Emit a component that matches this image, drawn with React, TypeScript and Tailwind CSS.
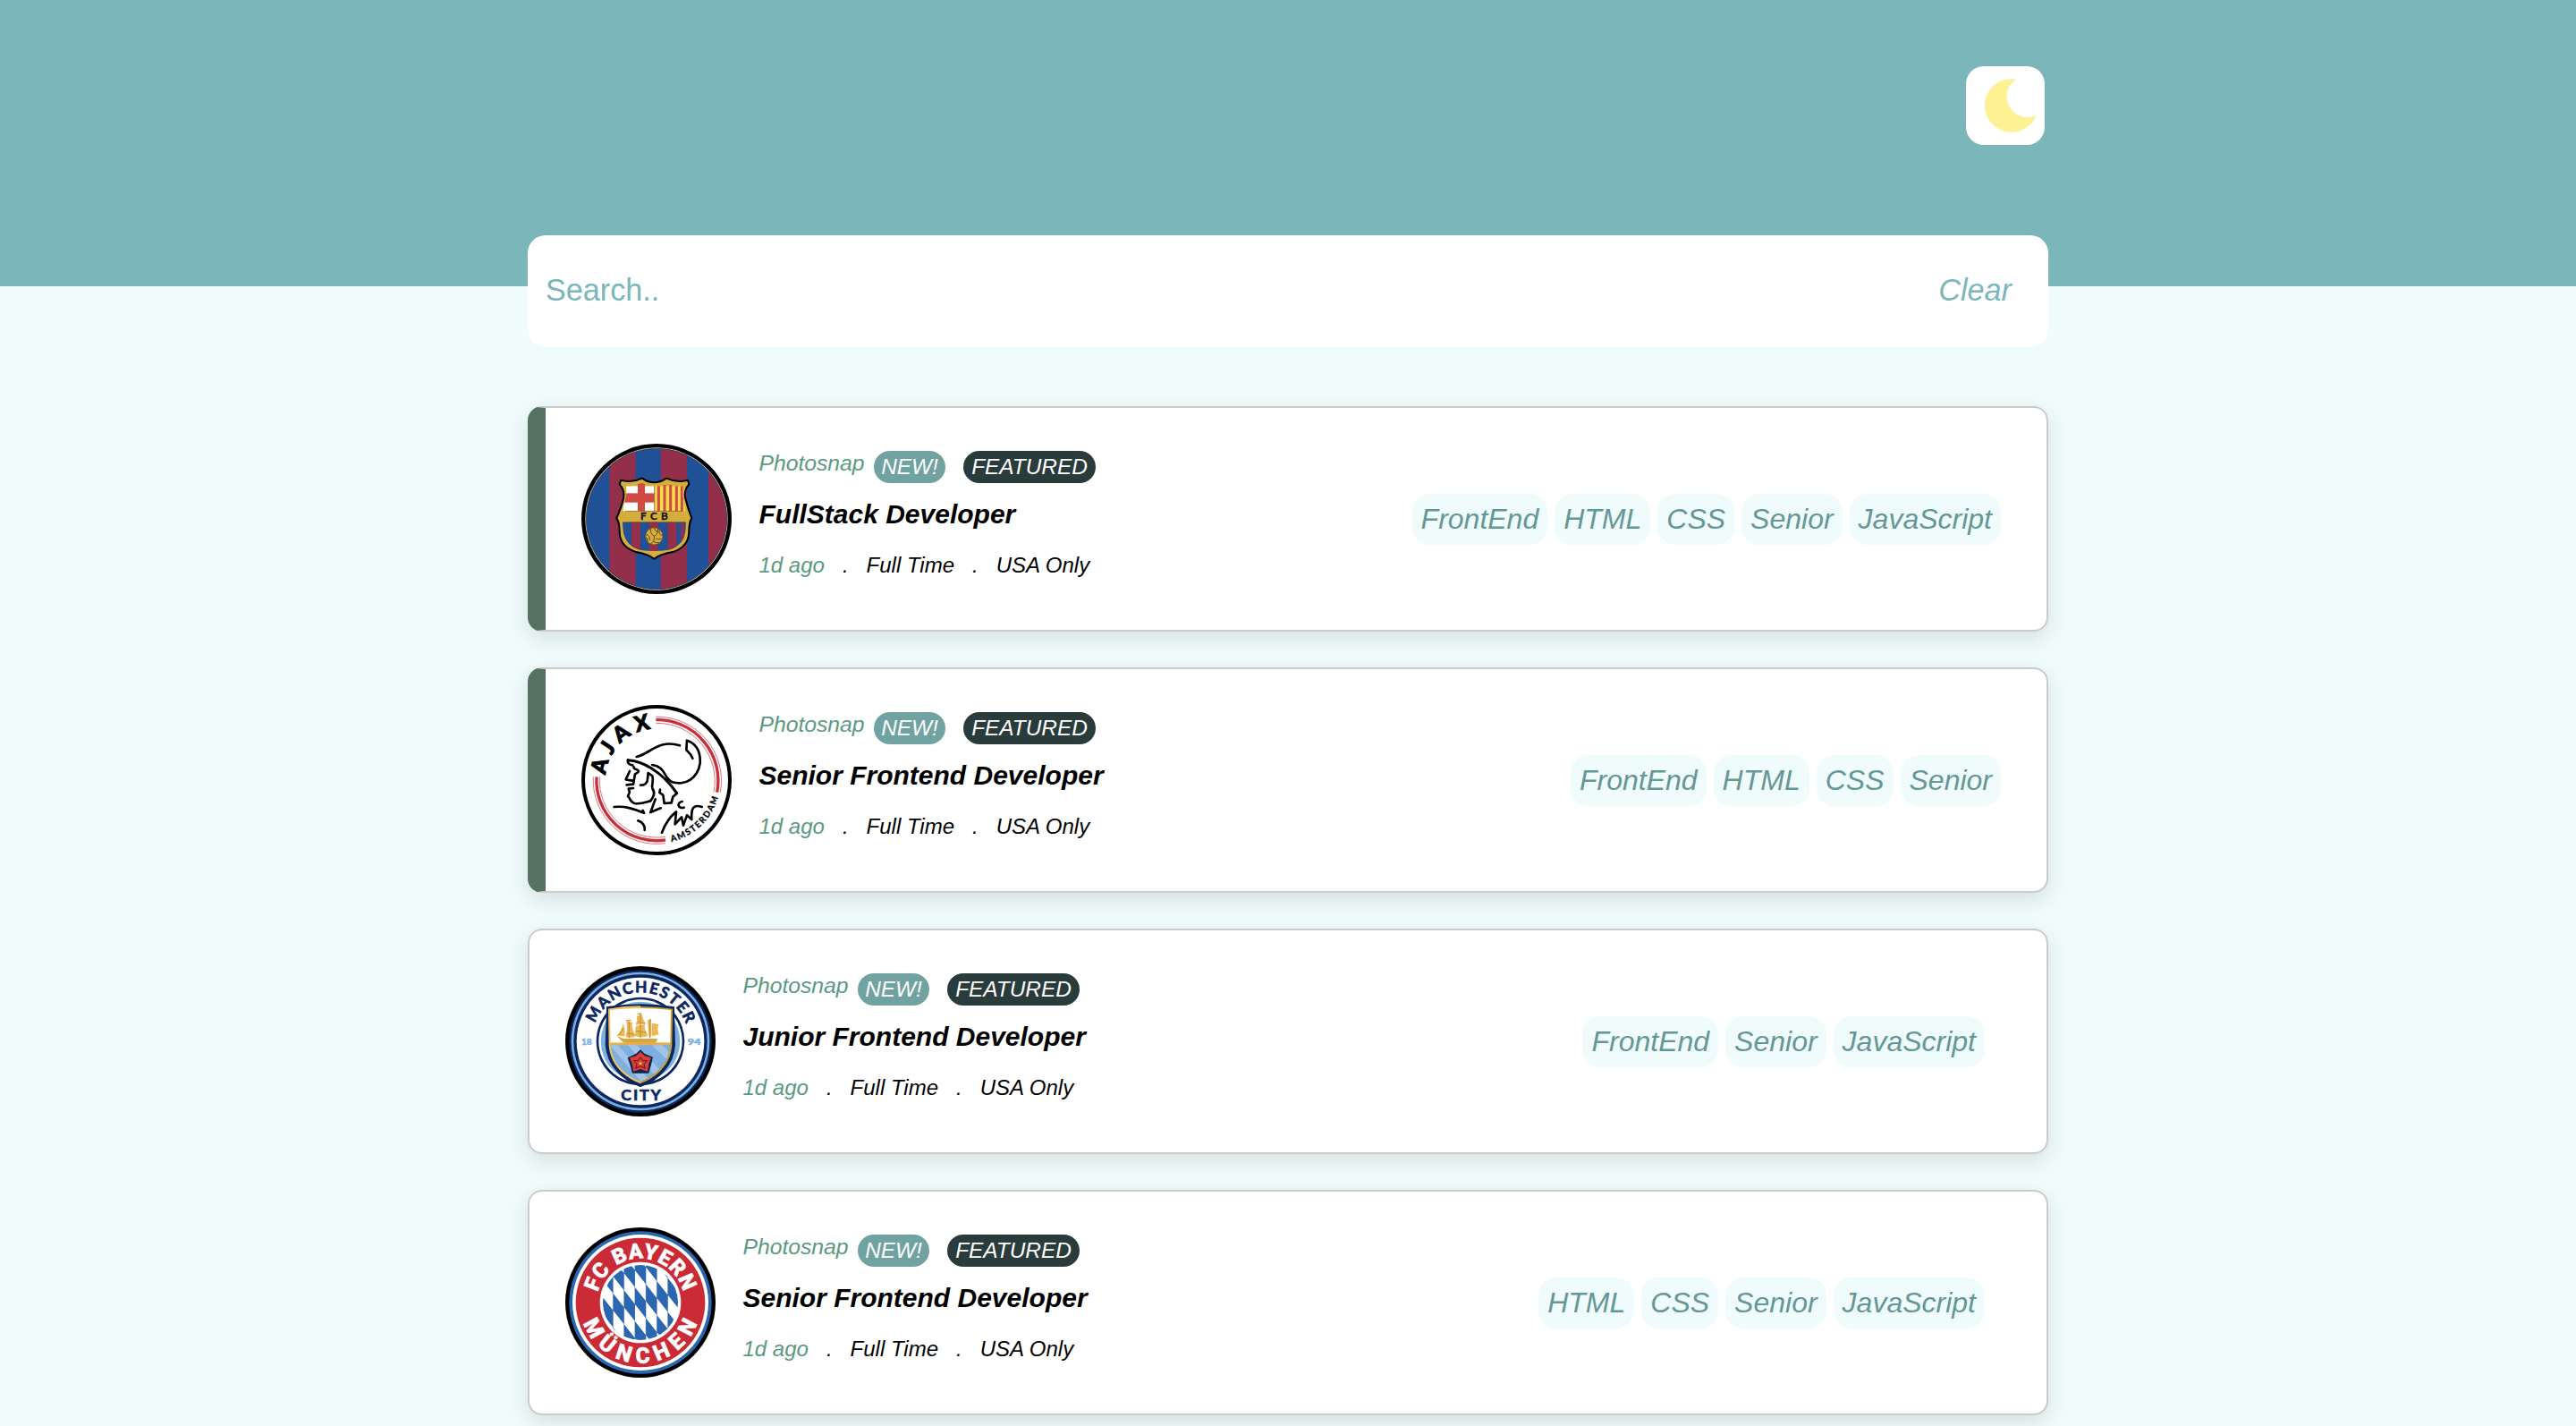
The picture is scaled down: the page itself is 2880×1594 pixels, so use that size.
import React from "react";

function BarcelonaCrest() {
  return (
    <svg viewBox="60 48 504 504" className="block size-[168px] not-italic">
      <defs>
        <clipPath id="fcb-disc"><circle cx="312" cy="300" r="236" /></clipPath>
        <clipPath id="fcb-shield">
          <path d="M210 190 Q236 190 263 179 Q283 190 304 190 Q325 190 345 179 Q370 190 402 190 Q396 215 404 240 Q412 275 410 330 Q408 385 360 402 Q325 410 304 410 Q283 410 250 402 Q202 385 199 330 Q196 275 205 240 Q214 215 210 190 Z" />
        </clipPath>
      </defs>
      <circle cx="312" cy="300" r="252" fill="#000" />
      <circle cx="312" cy="300" r="239" fill="#d9d9d9" />
      <g clipPath="url(#fcb-disc)">
        <rect x="60" y="48" width="504" height="504" fill="#205096" />
        <rect x="154" y="48" width="88" height="504" fill="#932f4b" />
        <rect x="326" y="48" width="88" height="504" fill="#932f4b" />
        <rect x="486" y="48" width="80" height="504" fill="#932f4b" />
      </g>
      <circle cx="312" cy="300" r="236" fill="none" stroke="#333" strokeWidth="2" />
      <path
        d="M193 170 Q230 180 264 164 Q283 178 304 178 Q325 178 345 164 Q380 180 417 170 L421 184 Q402 205 409 232 Q416 262 430 298 Q421 312 421 342 Q421 392 370 410 Q322 418 304 434 Q286 418 240 410 Q188 392 188 342 Q188 312 178 298 Q194 262 201 232 Q207 205 188 184 Z"
        fill="#d5ad3c" stroke="#000" strokeWidth="6" strokeLinejoin="round"
      />
      <g clipPath="url(#fcb-shield)">
        <rect x="196" y="190" width="109" height="84" fill="#fff" />
        <rect x="249" y="178" width="24" height="96" fill="#d24b42" />
        <rect x="196" y="214" width="109" height="31" fill="#d24b42" />
        <rect x="305" y="190" width="110" height="84" fill="#f8dc4a" />
        <path d="M319 190V274M339 186V274M359 186V274M379 190V274M397 190V274" stroke="#d24b42" strokeWidth="9" />
        <rect x="190" y="311" width="230" height="96" fill="#205096" />
        <path d="M243 311V407M302 311V407M364 311V407" stroke="#932f4b" strokeWidth="30" />
        <path d="M400 311V407" stroke="#932f4b" strokeWidth="12" />
      </g>
      <path d="M207 274H401M200 311H409M305 190V274" stroke="#6b5a22" strokeWidth="2" />
      <circle cx="304" cy="358" r="29" fill="#d5ad3c" stroke="#5b4a1c" strokeWidth="2" />
      <path d="M304 358Q290 350 292 332M304 358Q320 350 316 333M304 358Q306 376 292 384M278 350Q290 356 290 372M278 362Q284 370 282 376M322 338Q318 352 332 356M304 330Q306 342 318 344M310 366Q322 372 328 366M302 376Q312 382 320 380" fill="none" stroke="#5b4a1c" strokeWidth="3" />
      <text x="304" y="304" textAnchor="middle" textLength="92" fontSize="35" fontWeight="700" fill="#111" stroke="#111" strokeWidth="1" fontFamily="Lato, sans-serif">FCB</text>
    </svg>
  );
}

function AjaxCrest() {
  return (
    <svg viewBox="60 54 504 504" className="block size-[168px] not-italic">
      <defs>
        <path id="ajax-name" d="M141 289 A172 172 0 0 1 312 134" />
        <path id="ajax-city" d="M362 513 A214 214 0 0 0 525 330" />
      </defs>
      <circle cx="312" cy="306" r="246" fill="#fff" stroke="#000" strokeWidth="12" />
      <g fill="none" stroke="#c9303b">
        <path d="M310 104 A204 204 0 0 1 515 347" strokeWidth="10" />
        <path d="M310 94 A214 214 0 0 1 526 347M310 115 A194 194 0 0 1 504 347" strokeWidth="2" />
        <path d="M111 295 A202 202 0 0 0 342 507" strokeWidth="10" />
        <path d="M100 295 A213 213 0 0 0 342 518M121 295 A192 192 0 0 0 342 496" strokeWidth="2" />
      </g>
      <text fontSize="72" fontWeight="900" fontFamily="Lato, sans-serif" fill="#000" stroke="#000" strokeWidth="3" textLength="234">
        <textPath href="#ajax-name">AJAX</textPath>
      </text>
      <text fontSize="29" fontWeight="700" fontFamily="Lato, sans-serif" fill="#000" stroke="#000" strokeWidth="1" textLength="226">
        <textPath href="#ajax-city">AMSTERDAM</textPath>
      </text>
      <g fill="none" stroke="#000" strokeWidth="8" strokeLinejoin="round" strokeLinecap="round">
        <path d="M245 228C290 218 320 168 390 190" />
        <path d="M433 233C428 218 420 212 412 205L414 173C450 185 460 215 458 250C450 300 410 325 365 313C335 300 345 262 298 255" />
        <path d="M216 239C260 240 330 275 380 350" strokeWidth="9" />
        <path d="M216 239C214 250 222 256 232 256M236 262C234 272 248 268 252 276C250 284 240 284 240 286L234 320L212 322M222 276L209 304L232 308" />
        <path d="M234 333L218 335L222 346L216 360C226 368 220 378 238 384C256 388 276 380 292 376C300 364 310 350 298 334C294 322 304 312 298 292L284 282L282 302C282 314 274 324 258 323" />
        <path d="M380 350L367 362L362 382L338 384L334 356L322 348L324 338" />
        <path d="M170 396C205 392 235 402 270 416L266 408M250 442C266 446 274 460 272 474M330 482C340 455 355 430 378 412L374 454L396 430L402 458L414 424L430 438C428 410 430 384 464 396" />
        <path d="M398 378C380 380 382 404 404 398M308 370L292 414L326 400" />
      </g>
    </svg>
  );
}

function CityCrest() {
  return (
    <svg viewBox="66 45 504 504" className="block size-[168px] not-italic">
      <defs>
        <path id="mcfc-name" d="M166 237 A163 163 0 0 1 472 242" />
        <clipPath id="mcfc-shield"><path d="M216 192Q318 180 420 192L418 310C414 370 370 412 318 432C266 412 222 370 218 310Z" /></clipPath>
      </defs>
      <circle cx="318" cy="297" r="252" fill="#000" />
      <circle cx="318" cy="297" r="239" fill="#0b2761" />
      <circle cx="318" cy="297" r="228" fill="none" stroke="#7db0de" strokeWidth="8" />
      <circle cx="318" cy="297" r="214" fill="#fff" />
      <circle cx="318" cy="297" r="148" fill="#0b2761" />
      <circle cx="318" cy="297" r="140" fill="#fff" />
      <circle cx="318" cy="297" r="133" fill="#7db0de" />
      <path d="M208 184Q318 168 428 184L431 310C426 375 380 425 318 446C256 425 210 375 204 310Z" fill="#0b2761" stroke="#0b2761" strokeWidth="8" />
      <path d="M210 188Q318 172 426 188L424 310C420 374 374 418 318 439Z" fill="#c99a3a" />
      <path d="M210 188Q264 178 318 178V439C262 418 216 374 212 310Z" fill="#efc25e" />
      <g clipPath="url(#mcfc-shield)">
        <rect x="200" y="180" width="236" height="122" fill="#fff" />
        <rect x="200" y="302" width="236" height="8" fill="#e3b04b" />
        <rect x="200" y="310" width="236" height="130" fill="#7db0de" />
        <path d="M216 310H242L346 424L324 436ZM276 310H306L384 394L366 410ZM356 310H392L422 342V372Z" fill="#a3c4e8" />
      </g>
      <path d="M238 278L262 288H376L370 302H262Z" fill="#d8a63f" />
      <path d="M260 236Q256 262 238 278L266 280Q268 258 260 236ZM270 232H290Q288 258 302 280Q288 288 268 282Q278 256 270 232ZM306 212L324 208Q326 226 336 236L302 242Q308 226 306 212ZM302 246L332 240Q332 262 344 278Q322 288 300 278ZM342 226L354 222V280H346ZM356 236L380 240Q372 256 380 274L356 280Z" fill="#eab954" />
      <path d="M270 228L286 226M308 206L322 204M318 206V286M280 230V286M350 222V286M262 252L246 276M310 232L334 238M304 262L338 268M272 270L298 274" stroke="#c8973a" strokeWidth="4" />
      <path d="M318 324L332 338L360 350L354 376L346 404H291L283 376L275 352L304 338Z" fill="#122452" />
      <path d="M318 332L332 346L354 352L346 372L342 398L318 390L295 398L290 372L282 352L304 346Z" fill="#dd3c33" />
      <path d="M318 350L326 362L340 362L330 374L334 388L318 380L302 388L306 374L296 362L310 362Z" fill="#dd3c33" stroke="#5d1430" strokeWidth="3" />
      <circle cx="318" cy="371" r="5" fill="#f2c744" />
      <text fontSize="52" fontWeight="700" fontFamily="Lato, sans-serif" fill="#0b2761" stroke="#0b2761" strokeWidth="2" textLength="394">
        <textPath href="#mcfc-name">MANCHESTER</textPath>
      </text>
      <text x="320" y="495" textAnchor="middle" textLength="134" fontSize="53" fontWeight="700" fontFamily="Lato, sans-serif" fill="#0b2761" stroke="#0b2761" strokeWidth="2">CITY</text>
      <text x="120" y="309" textLength="35" fontSize="28" fontWeight="700" fontFamily="Lato, sans-serif" fill="#7db0de" stroke="#7db0de" strokeWidth="1.5" lengthAdjust="spacingAndGlyphs">18</text>
      <text x="476" y="309" textLength="44" fontSize="28" fontWeight="700" fontFamily="Lato, sans-serif" fill="#7db0de" stroke="#7db0de" strokeWidth="1.5" lengthAdjust="spacingAndGlyphs">94</text>
    </svg>
  );
}

const LOZENGES = [-2, -1, 0, 1, 2, 3, 4, 5].flatMap((column) =>
  [-2, -1, 0, 1, 2].map((row) => {
    const left = 263 + 36.7 * column;
    const top = 262 - 10.3 * column + 114 * row;
    const right = left + 36.7;
    return `M${left} ${top}V${top + 57}L${right} ${top + 103.5}V${top + 46.5}Z`;
  }),
).join("");

function BayernCrest() {
  return (
    <svg viewBox="66 51 504 504" className="block size-[168px] not-italic">
      <defs>
        <path id="fcbm-top" d="M175 268 A147 147 0 0 1 461 268" />
        <path id="fcbm-bottom" d="M127 372 A203 203 0 0 0 509 372" />
        <clipPath id="fcbm-disc"><circle cx="318" cy="303" r="126" /></clipPath>
      </defs>
      <circle cx="318" cy="303" r="252" fill="#000" />
      <circle cx="318" cy="303" r="239" fill="#2b66b0" />
      <circle cx="318" cy="303" r="228" fill="#fff" />
      <circle cx="318" cy="303" r="217" fill="#cb2b36" />
      <circle cx="318" cy="303" r="136" fill="#fff" />
      <path d={LOZENGES} fill="#2b66b0" clipPath="url(#fcbm-disc)" />
      <path d="M226 215V390M263 190V416M299 180V426M336 180V426M373 190V416M410 215V390" stroke="#2b66b0" strokeWidth="1.5" opacity="0.7" />
      <g fontFamily="Roboto, sans-serif" fontWeight="800" fill="#fff" stroke="#fff" strokeWidth="2">
        <text fontSize="71" textLength="392"><textPath href="#fcbm-top">FC BAYERN</textPath></text>
        <text fontSize="73" textLength="496"><textPath href="#fcbm-bottom">MÜNCHEN</textPath></text>
      </g>
    </svg>
  );
}

interface Job {
  position: string;
  crest: React.ReactNode;
  featured: boolean;
  tags: string[];
}

const JOBS: Job[] = [
  { position: "FullStack Developer", crest: <BarcelonaCrest />, featured: true, tags: ["FrontEnd", "HTML", "CSS", "Senior", "JavaScript"] },
  { position: "Senior Frontend Developer", crest: <AjaxCrest />, featured: true, tags: ["FrontEnd", "HTML", "CSS", "Senior"] },
  { position: "Junior Frontend Developer", crest: <CityCrest />, featured: false, tags: ["FrontEnd", "Senior", "JavaScript"] },
  { position: "Senior Frontend Developer", crest: <BayernCrest />, featured: false, tags: ["HTML", "CSS", "Senior", "JavaScript"] },
];

function JobCard({ job }: { job: Job }) {
  return (
    <article
      className={
        "flex h-[252px] items-center rounded-[16px] border-2 border-[#cbcbcb] bg-white pl-10 italic shadow-[0_8px_24px_rgba(0,0,0,0.11)] " +
        (job.featured ? "border-l-[20px] border-l-[#54725f]" : "")
      }
    >
      {job.crest}
      <div className="ml-[30.5px] flex h-[168px] flex-col pt-[7px]">
        <div className="flex h-[37px] items-start">
          <span className="w-[119px] text-[24.700px] leading-[30px] text-[#5a9a7e]">Photosnap</span>
          <span className="mt-px ml-[9.5px] w-20 rounded-full bg-[#6fa2a1] text-center text-[24.400px] leading-[36px] text-white">NEW!</span>
          <span className="mt-px ml-5 w-[148px] rounded-full bg-[#293b3b] text-center text-[24.400px] leading-[36px] text-white">FEATURED</span>
        </div>
        <h2 className="mt-[18px] text-[30px] leading-[34px] font-bold text-black">{job.position}</h2>
        <div className="mt-[26px] flex gap-5 text-[24px] leading-[27px] text-black">
          <span className="text-[#5a9a7e]">1d ago</span>
          <span>.</span>
          <span>Full Time</span>
          <span>.</span>
          <span>USA Only</span>
        </div>
      </div>
      <ul className={"ml-auto flex gap-2 " + (job.featured ? "mr-[51px]" : "mr-[69px]")}>
        {job.tags.map((tag) => (
          <li key={tag} className="rounded-[20px] bg-[#effcfb] px-2.5 text-[32px] leading-[57px] text-[#659797]">
            {tag}
          </li>
        ))}
      </ul>
    </article>
  );
}

export default function App() {
  return (
    <div className="h-[1594px] overflow-hidden bg-[#effcfb] font-['Liberation_Sans',Arial,sans-serif]">
      <header className="h-[320px] bg-[#7ab6ba] pt-[74px]">
        <div className="mx-auto flex w-[1700px] justify-end pr-1">
          <button className="size-[88px] rounded-[20px] bg-white" aria-label="Toggle theme">
            <svg viewBox="114 102 264 264" className="block size-[88px]">
              <path d="M283 146A89.500 89.500 0 1 0 350 266A68.800 68.800 0 0 1 283 146Z" fill="#fdf193" />
            </svg>
          </button>
        </div>
      </header>
      <main className="relative mx-auto -mt-[57px] w-[1700px]">
        <div className="flex h-[125px] items-center justify-between rounded-[20px] bg-white pr-[41px] pb-0.5 pl-5 text-[34.200px] leading-none text-[#7ab6ba]">
          <span>Search..</span>
          <span className="italic">Clear</span>
        </div>
        <div className="mt-[66px] flex flex-col gap-10">
          {JOBS.map((job, index) => (
            <JobCard key={index} job={job} />
          ))}
        </div>
      </main>
    </div>
  );
}
